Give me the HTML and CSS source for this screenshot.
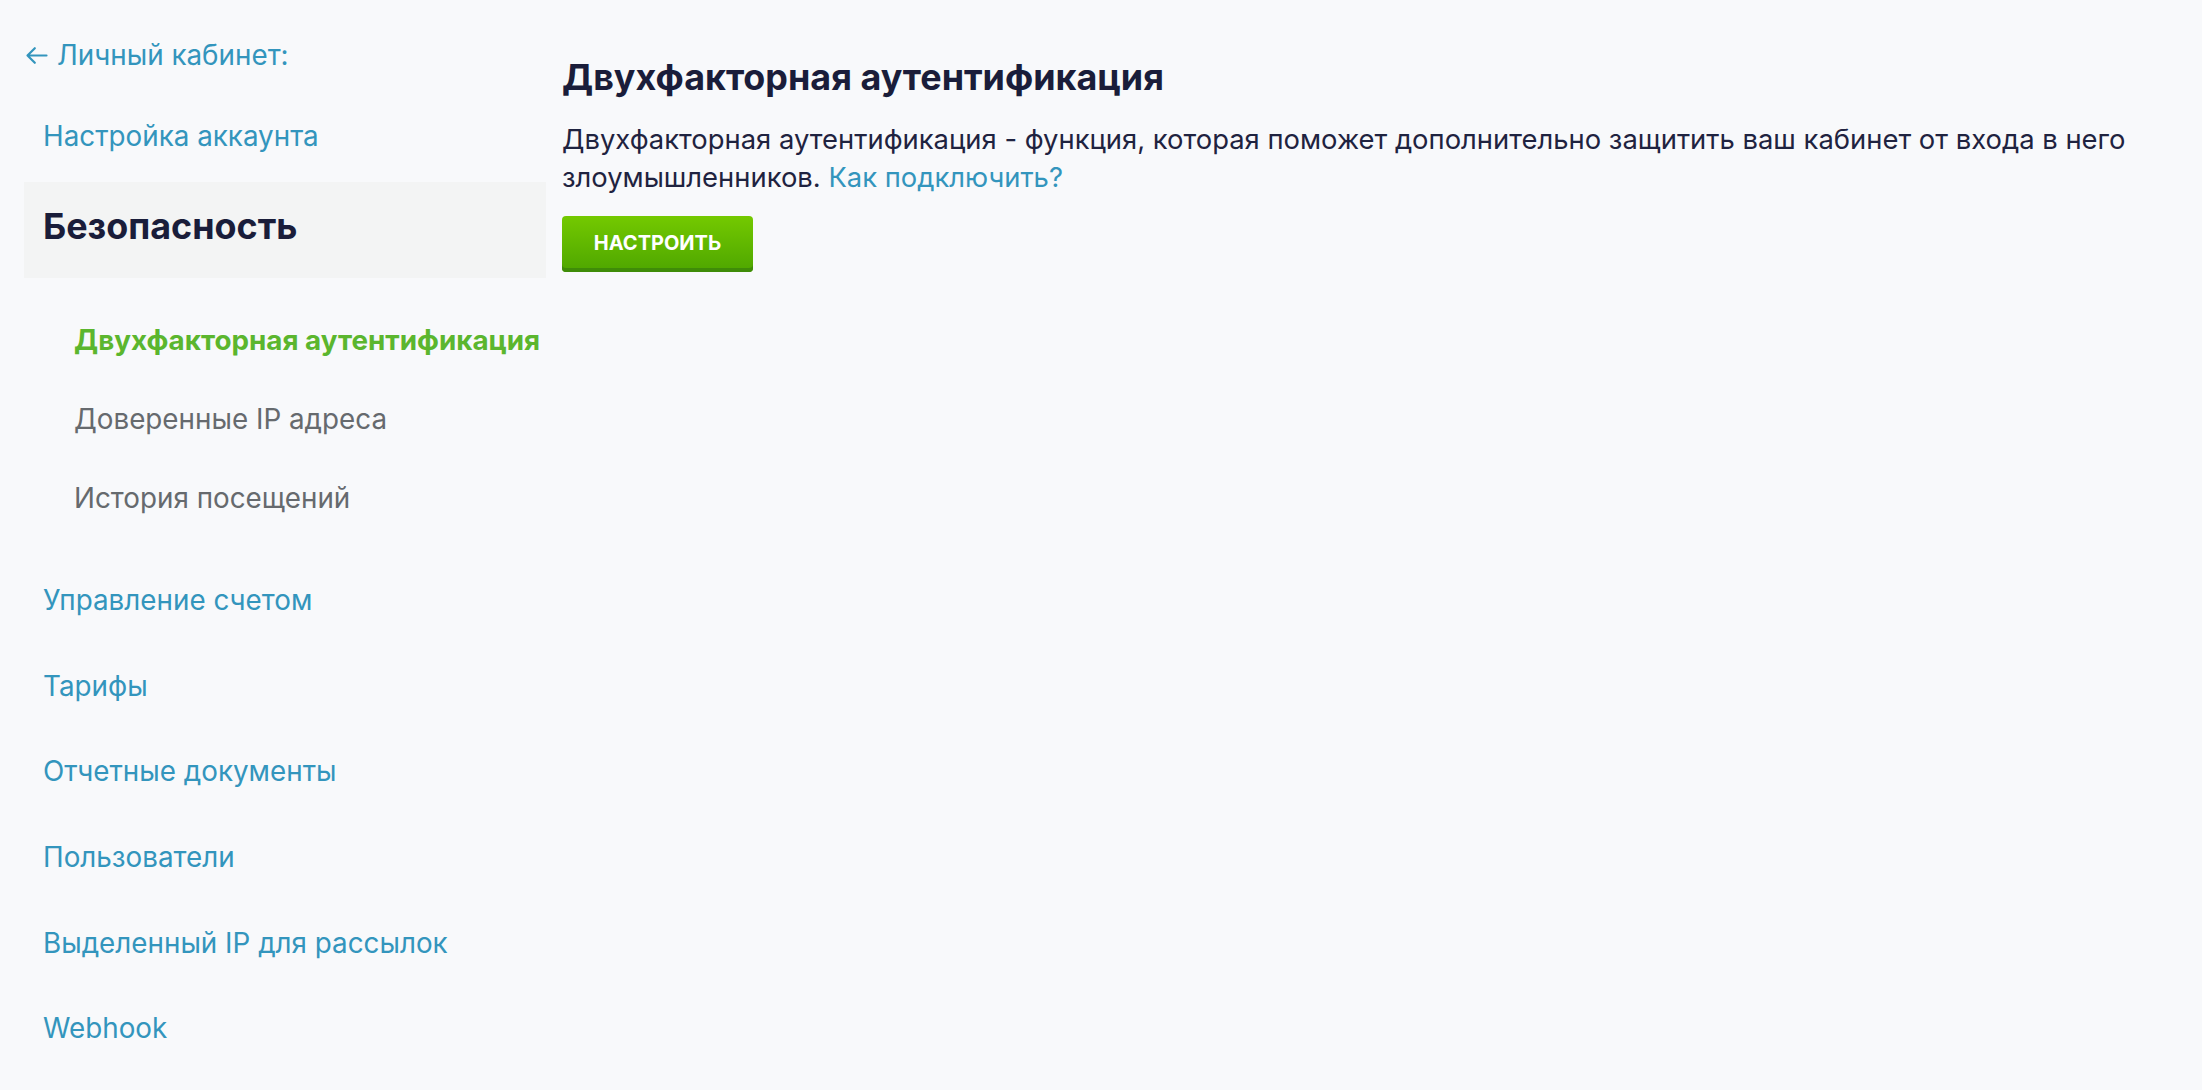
FILE: index.html
```html
<!DOCTYPE html>
<html lang="ru">
<head>
<meta charset="utf-8">
<title>Безопасность</title>
<link rel="stylesheet" href="styles.css">
</head>
<body>
<div class="page">
  <aside class="sidebar">
    <a class="back" href="#">
      <svg class="back-icon" width="23" height="19" viewBox="0 0 23 19" aria-hidden="true">
        <path d="M21.5 9.5H2.5M9.8 2.2L2.5 9.5L9.8 16.8" fill="none" stroke="currentColor" stroke-width="2.2" stroke-linecap="round" stroke-linejoin="round"/>
      </svg>
      <span>Личный кабинет:</span>
    </a>
    <a class="nav-item nav-first" href="#">Настройка аккаунта</a>
    <div class="section-box">Безопасность</div>
    <div class="sub-list">
      <a class="sub-item sub-active" href="#">Двухфакторная аутентификация</a>
      <a class="sub-item" href="#">Доверенные IP адреса</a>
      <a class="sub-item" href="#">История посещений</a>
    </div>
    <div class="nav-list">
      <a class="nav-item" href="#">Управление счетом</a>
      <a class="nav-item" href="#">Тарифы</a>
      <a class="nav-item" href="#">Отчетные документы</a>
      <a class="nav-item" href="#">Пользователи</a>
      <a class="nav-item" href="#">Выделенный IP для рассылок</a>
      <a class="nav-item" href="#">Webhook</a>
    </div>
  </aside>
  <main class="content">
    <h1 class="title">Двухфакторная аутентификация</h1>
    <p class="desc">Двухфакторная аутентификация - функция, которая поможет дополнительно защитить ваш кабинет от входа в него злоумышленников. <a class="link" href="#">Как подключить?</a></p>
    <button class="btn" type="button">Настроить</button>
  </main>
</div>
</body>
</html>
```

FILE: styles.css
```css
html, body {
  margin: 0;
  padding: 0;
  background: #f8f9fb;
}

body {
  font-family: "Inter", "Noto Sans", sans-serif;
  color: #1b1f3b;
}

a {
  text-decoration: none;
}

.page {
  display: flex;
  align-items: flex-start;
  min-height: 1090px;
}

.sidebar {
  width: 522px;
  margin-left: 24px;
  display: flex;
  flex-direction: column;
  flex-shrink: 0;
}

.back {
  display: flex;
  align-items: center;
  gap: 9px;
  margin-top: 36px;
  height: 38px;
  font-size: 27.8px;
  color: #3395bd;
  padding-left: 1px;
}

.back-icon {
  display: block;
}

.nav-item {
  display: block;
  font-size: 27.8px;
  line-height: 38px;
  height: 38px;
  color: #3395bd;
  padding-left: 19px;
  white-space: nowrap;
}

.nav-first {
  margin-top: 43px;
}

.section-box {
  margin-top: 27px;
  height: 96px;
  box-sizing: border-box;
  background: #f3f4f4;
  display: flex;
  align-items: center;
  padding: 0 0 8px 19px;
  font-size: 35.9px;
  font-weight: 700;
  color: #1a1d3a;
}

.sub-list {
  display: flex;
  flex-direction: column;
  gap: 41px;
  margin-top: 43px;
}

.sub-item {
  display: block;
  font-size: 27.8px;
  line-height: 38px;
  height: 38px;
  padding-left: 50px;
  color: #666a6e;
  white-space: nowrap;
}

.sub-active {
  color: #5bb62e;
  font-weight: 700;
}

.nav-list {
  display: flex;
  flex-direction: column;
  gap: 47.7px;
  margin-top: 64px;
}

.content {
  flex: 1;
  margin-left: 16px;
  padding-right: 20px;
}

.title {
  margin: 56px 0 0;
  font-size: 35.9px;
  line-height: 42px;
  font-weight: 700;
  color: #1a1d3a;
}

.desc {
  margin: 22px 0 0;
  font-size: 27.4px;
  line-height: 38px;
  color: #1f2340;
}

.link {
  color: #3395bd;
}

.btn {
  display: block;
  margin-top: 20px;
  width: 191px;
  height: 56px;
  padding: 0 0 3px;
  border: none;
  border-radius: 4px;
  background: linear-gradient(#74c900, #4ea600);
  box-shadow: inset 0 -4px 0 #3f8c08;
  color: #ffffff;
  font-family: "Inter", "Noto Sans", sans-serif;
  font-weight: 700;
  font-size: 20px;
  text-transform: uppercase;
  cursor: pointer;
}
```
